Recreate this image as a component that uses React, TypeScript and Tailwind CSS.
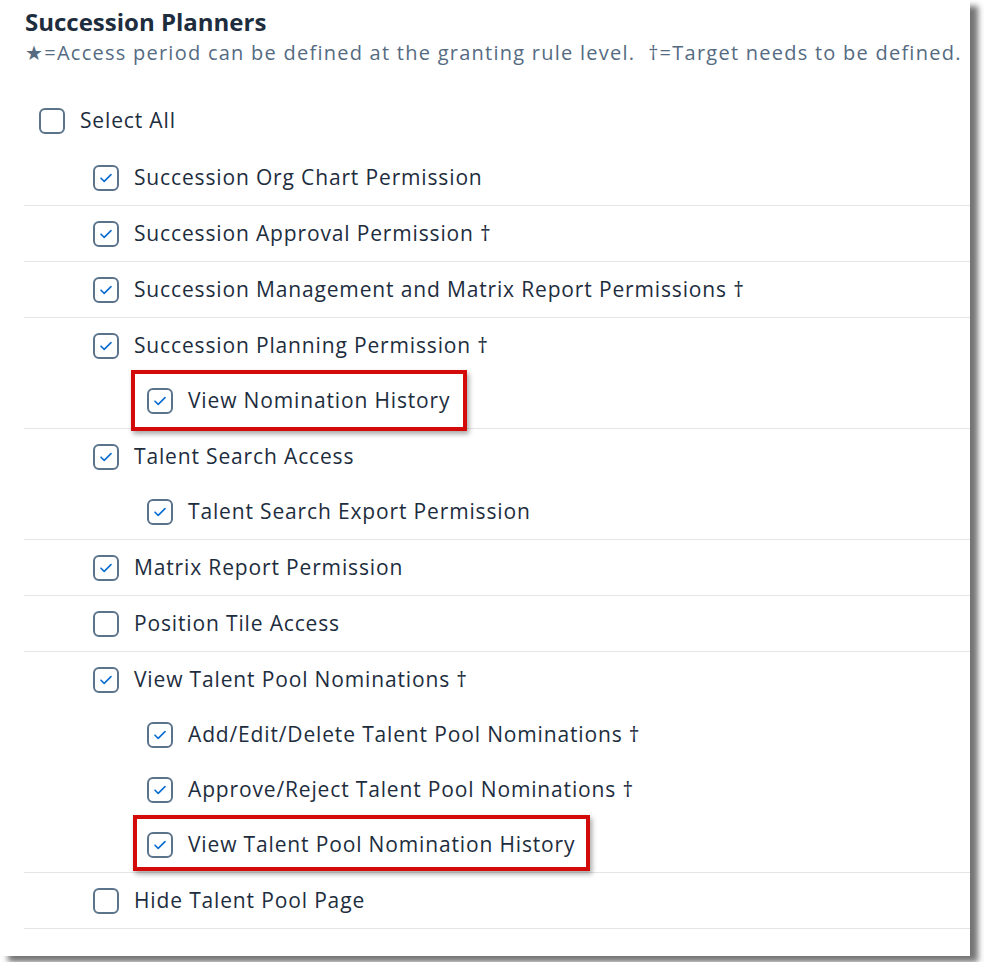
import React from "react"

type Item = {
  label: string
  level: 1 | 2
  checked: boolean
  box?: string
}

// each group = one bordered block, first item is the parent
const groups: Item[][] = [
  [{ label: "Succession Org Chart Permission", level: 1, checked: true }],
  [{ label: "Succession Approval Permission †", level: 1, checked: true }],
  [{ label: "Succession Management and Matrix Report Permissions †", level: 1, checked: true }],
  [
    { label: "Succession Planning Permission †", level: 1, checked: true },
    {
      label: "View Nomination History",
      level: 2,
      checked: true,
      box: "left-[-16px] right-[-17px] top-[-18px] bottom-[-17px]",
    },
  ],
  [
    { label: "Talent Search Access", level: 1, checked: true },
    { label: "Talent Search Export Permission", level: 2, checked: true },
  ],
  [{ label: "Matrix Report Permission", level: 1, checked: true }],
  [{ label: "Position Tile Access", level: 1, checked: false }],
  [
    { label: "View Talent Pool Nominations †", level: 1, checked: true },
    { label: "Add/Edit/Delete Talent Pool Nominations †", level: 2, checked: true },
    { label: "Approve/Reject Talent Pool Nominations †", level: 2, checked: true },
    {
      label: "View Talent Pool Nomination History",
      level: 2,
      checked: true,
      box: "left-[-14px] right-[-15px] top-[-17px] bottom-[-13px]",
    },
  ],
  [{ label: "Hide Talent Pool Page", level: 1, checked: false }],
]

function Checkbox({ checked }: { checked: boolean }) {
  return (
    <span className="w-[26px] h-[26px] shrink-0 rounded-[6px] border-2 border-[#5b738b] bg-white flex items-center justify-center">
      {checked && (
        <svg width="16" height="16" viewBox="0 0 16 16" fill="none">
          <path d="M3 8.2l3.2 3.2L13 4.6" stroke="#0a6ed1" strokeWidth="1.6" strokeLinecap="round" strokeLinejoin="round" />
        </svg>
      )}
    </span>
  )
}

function Row({ item }: { item: Item }) {
  return (
    <div className={`h-[55px] flex items-center ${item.level === 1 ? "pl-[69px]" : "pl-[123px]"}`}>
      <div className="relative flex items-center gap-[15px]">
        {item.box && (
          <span className={`absolute ${item.box} border-4 border-[#d20a0a] shadow-[2px_3px_5px_rgba(0,0,0,0.35)]`} />
        )}
        <Checkbox checked={item.checked} />
        <span className="relative text-[21px] leading-none tracking-[0.85px] text-[#1d2d3e] whitespace-nowrap">
          {item.label}
        </span>
      </div>
    </div>
  )
}

export default function App() {
  return (
    <div className="h-[962px] w-[984px] overflow-hidden bg-white" style={{ fontFamily: '"Open Sans", "Noto Sans", sans-serif' }}>
      <div className="w-[970px] h-[956px] bg-white shadow-[8px_6px_6px_rgba(0,0,0,0.55)] pl-[24px]">
        {/* Header */}
        <div className="pt-[7px] pl-[1px]">
          <h1 className="text-[24px] leading-[30px] font-bold text-[#1d2d3e]">Succession Planners</h1>
          <p className="mt-[4px] text-[20px] leading-[24px] tracking-[1.25px] text-[#556b82] whitespace-pre">
            {"★=Access period can be defined at the granting rule level.  †=Target needs to be defined."}
          </p>
        </div>

        {/* Select all */}
        <div className="mt-[28px] h-[55px] flex items-center pl-[15px] gap-[15px]">
          <Checkbox checked={false} />
          <span className="text-[21px] leading-none tracking-[0.85px] text-[#1d2d3e]">Select All</span>
        </div>

        <div className="mt-[2px]">
          {groups.map((g, i) => (
            <div key={i} className="border-b border-[#e5e5e5]">
              {g.map((item) => (
                <Row key={item.label} item={item} />
              ))}
            </div>
          ))}
        </div>
      </div>
    </div>
  )
}
